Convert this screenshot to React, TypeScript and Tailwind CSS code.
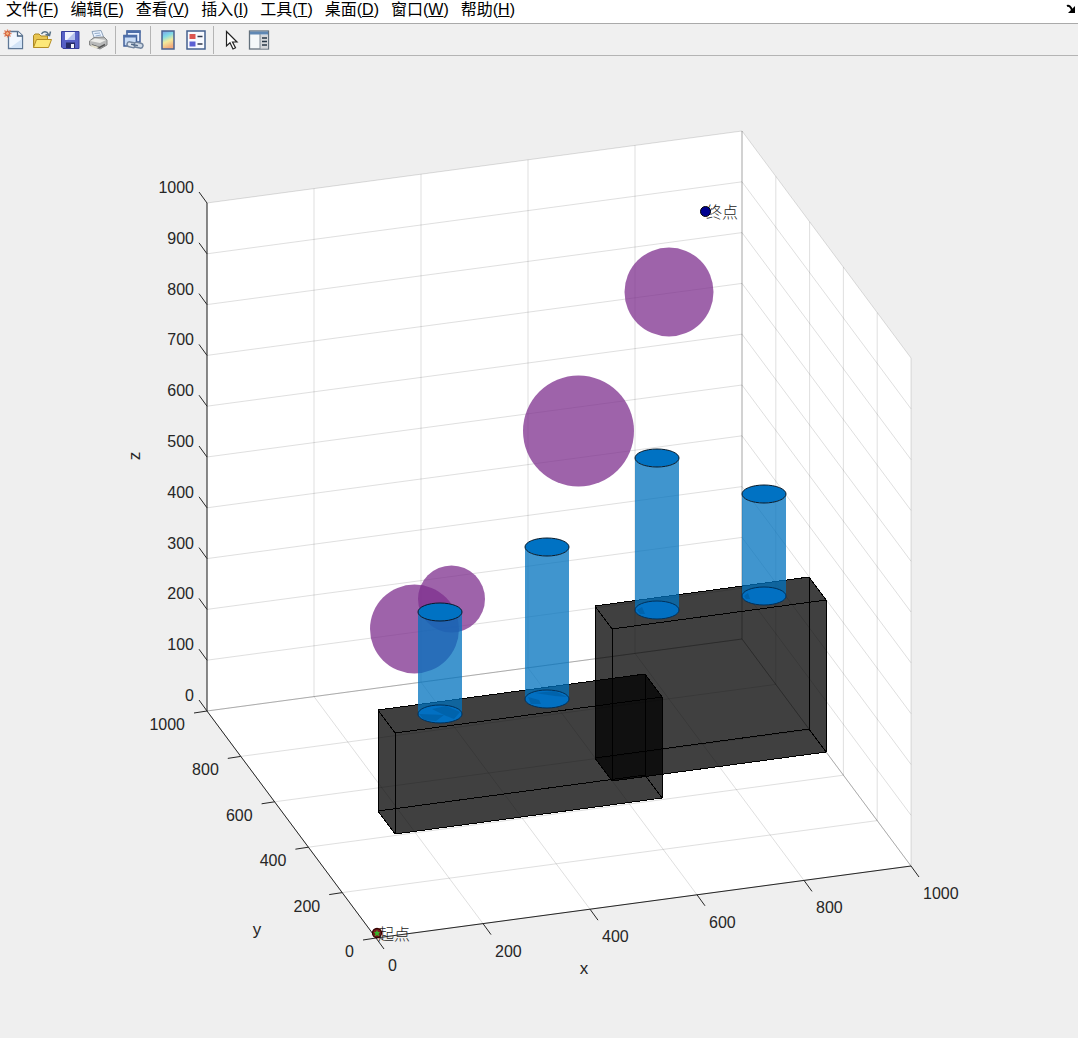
import React from "react";

const MENUS = [
  ["文件", "F"], ["编辑", "E"], ["查看", "V"], ["插入", "I"],
  ["工具", "T"], ["桌面", "D"], ["窗口", "W"], ["帮助", "H"],
];

function NewIcon() {
  return (
    <svg viewBox="0 0 22 22" className="size-[22px]">
      <path d="M5.500 2.500H15L19.500 6.500V19.500H5.500Z" fill="#f2f8ff" stroke="#5f7896" strokeWidth="1.300" />
      <path d="M6.500 19L19 10V19Z" fill="#d3e4f7" />
      <path d="M14.500 2.500V7H19.500" fill="#fff" stroke="#47617f" strokeWidth="1.300" />
      <path d="M4.500 0.500V8.500M0.500 4.500H8.500M1.500 1.500L7.500 7.500M7.500 1.500L1.500 7.500" stroke="#df7e5a" strokeWidth="1.300" />
      <circle cx="4.500" cy="4.500" r="2" fill="#f7b07d" stroke="#cf5b33" />
    </svg>
  );
}
function OpenIcon() {
  return (
    <svg viewBox="0 0 22 22" className="size-[22px]">
      <path d="M2.500 18.500V6.500L4 5H8L10 7H16.500V11" fill="#e9c550" stroke="#a98725" />
      <path d="M2.500 18.500L5.500 10.500H20.500L17.500 18.500Z" fill="#fde878" stroke="#b58e24" />
      <path d="M10.500 5C12 2 16 2 17.500 5.500M19.500 2.500L18.500 6.500L14.500 5.500" fill="none" stroke="#587186" strokeWidth="1.500" />
    </svg>
  );
}
function SaveIcon() {
  return (
    <svg viewBox="0 0 22 22" className="size-[22px]">
      <path d="M2.500 2.500H20V19.500H4L2.500 18Z" fill="#5660c6" stroke="#363e9c" />
      <path d="M6 3H16V11H6Z" fill="#eef1fd" />
      <path d="M16 3V11H8Z" fill="#b5c2ee" />
      <path d="M7 13.500H16V19H7Z" fill="#262c68" />
      <path d="M12 15H15V19H12Z" fill="#f0f2fb" />
    </svg>
  );
}
function PrintIcon() {
  return (
    <svg viewBox="0 0 22 22" className="size-[22px]">
      <path d="M5 2.500L14 1.500L17 9L8 11Z" fill="#eaf3ff" stroke="#8da1b9" />
      <path d="M7.500 4.500L13 4M8.500 7L14 6" stroke="#91a9c8" />
      <path d="M2.500 12L7 8.500L17 8L20 11V16L13 20L2.500 16Z" fill="#b8b9b9" stroke="#858686" />
      <path d="M3 12L8 9.500L19 11L13 14Z" fill="#ededea" />
      <path d="M5 16L12.500 18.500L18 15.500" fill="none" stroke="#555" strokeWidth="1.500" />
      <path d="M5 16L12 18L9 19.500L3 17Z" fill="#e6e2cf" />
    </svg>
  );
}
function LinkIcon() {
  return (
    <svg viewBox="0 0 22 22" className="size-[22px]">
      <path d="M5 2H18V13H5Z" fill="#eaf2ff" stroke="#405f99" strokeWidth="1.500" />
      <path d="M4.500 1.500H18.500V4H4.500Z" fill="#4d6ea9" />
      <path d="M2 6.500H14.500V17H2Z" fill="#c9dcf5" stroke="#405f99" strokeWidth="1.500" />
      <path d="M1.500 6H15V8.500H1.500Z" fill="#4d6ea9" />
      <g transform="rotate(12 13 16)" strokeWidth="1.500">
        <rect x="5" y="14" width="9" height="5" rx="2.500" fill="#dfe6ef" stroke="#71849e" />
        <rect x="12" y="13" width="9" height="5" rx="2.500" fill="#d0dae6" stroke="#71849e" />
        <path d="M9 16H16" stroke="#536a88" />
      </g>
    </svg>
  );
}
function ColorbarIcon() {
  return (
    <svg viewBox="0 0 22 22" className="size-[22px]">
      <defs>
        <linearGradient id="spectrum" x1="0" y1="0" x2="0.300" y2="1">
          <stop offset="0" stopColor="#7c9ce8" /><stop offset="0.350" stopColor="#7fdbe8" />
          <stop offset="0.650" stopColor="#f2eb9c" /><stop offset="1" stopColor="#f4ac7c" />
        </linearGradient>
      </defs>
      <rect x="5" y="2" width="12" height="18" fill="url(#spectrum)" stroke="#4a608f" strokeWidth="1.500" />
    </svg>
  );
}
function LegendIcon() {
  return (
    <svg viewBox="0 0 22 22" className="size-[22px]">
      <rect x="2" y="2" width="18" height="18" fill="#f8faff" stroke="#44608f" strokeWidth="1.500" />
      <path d="M4.500 5H10.500V10H4.500Z" fill="#dc5450" /><path d="M4.500 12.500H10.500V17.500H4.500Z" fill="#5a5fd3" />
      <path d="M12.500 7.500H17.500M12.500 15H17.500" stroke="#30394c" strokeWidth="1.500" />
    </svg>
  );
}
function PointerIcon() {
  return (
    <svg viewBox="0 0 22 22" className="size-[22px]">
      <path d="M6.500 2.500V17L10 13.800L13 20L15.500 18.800L12.500 13H17Z" fill="#fff" stroke="#222" strokeWidth="1.200" />
    </svg>
  );
}
function InspectorIcon() {
  return (
    <svg viewBox="0 0 22 22" className="size-[22px]">
      <rect x="1.500" y="2" width="19" height="18" fill="#f5f8f9" stroke="#64717d" strokeWidth="1.300" />
      <path d="M2 2.500H20V5.500H2Z" fill="#5f88b4" /><path d="M12 6H20V19.500H12Z" fill="#d5d7da" />
      <path d="M12 5V20" stroke="#7f8b95" /><path d="M14 9H19M14 12.500H19M14 16H19" stroke="#273746" strokeWidth="1.500" />
    </svg>
  );
}

const TOOLS = [
  { name: "新建", Icon: NewIcon }, { name: "打开", Icon: OpenIcon },
  { name: "保存", Icon: SaveIcon }, { name: "打印", Icon: PrintIcon },
  { name: "链接绘图", Icon: LinkIcon, divided: true },
  { name: "颜色栏", Icon: ColorbarIcon, divided: true }, { name: "图例", Icon: LegendIcon },
  { name: "编辑绘图", Icon: PointerIcon, divided: true }, { name: "属性检查器", Icon: InspectorIcon },
];

type Point = [number, number, number];

/** Orthographic projection from data space (0 to 1000 on each axis) to the drawing. */
function project([x, y, z]: Point) {
  return [376 + 0.535 * x - 0.169 * y, 938 - 0.072 * x - 0.227 * y - 0.508 * z];
}
const toPath = (...points: Point[]) =>
  "M" + points.map((p) => project(p).map((n) => n.toFixed(1)).join(" ")).join("L");

const EVEN = [0, 200, 400, 600, 800, 1000];
const TENS = [0, 100, 200, 300, 400, 500, 600, 700, 800, 900, 1000];
const GRID = [
  ...EVEN.map((v) => toPath([v, 0, 0], [v, 1000, 0], [v, 1000, 1000])),
  ...EVEN.map((v) => toPath([0, v, 0], [1000, v, 0], [1000, v, 1000])),
  ...TENS.map((v) => toPath([0, 1000, v], [1000, 1000, v], [1000, 0, v])),
].join("");

const SPHERES = [
  [669, 292, 44.5], [578.5, 431, 55.5], [451.5, 599, 33.5], [414.5, 629, 44.5],
];
const CYLINDERS = [
  { x: 657, top: 458, bottom: 610, shade: "M-20 0L-15 -3L-12 4L-17 4Z" },
  { x: 764, top: 494, bottom: 596, shade: "M-20 0L-16 -3L-14 3L-18 3Z" },
  { x: 440, top: 612, bottom: 714, shade: "M-8 -5L6 -8L20 -2L14 5L4 1Z M-21 0L4 1L-4 7L-16 6Z" },
  { x: 547, top: 547, bottom: 699, shade: "M-19 -2L-8 1L-6 5L-16 5Z M-12 -6L8 -8L20 -2L8 -3Z" },
];
const BOXES = [
  { x: 595, y: 606, width: 214, rise: 29, height: 152 },
  { x: 378, y: 710, width: 267, rise: 36, height: 101 },
];

function Box({ x, y, width, rise, height }: (typeof BOXES)[number]) {
  const right = x + width;
  const far = y - rise;
  const outline = `M${x} ${y}L${right} ${far}L${right + 17} ${far + 23}V${far + 23 + height}L${x + 17} ${y + 23 + height}L${x} ${y + height}Z`;
  return (
    <g>
      <path d={outline} fill="#000" fillOpacity="0.750" />
      <path
        d={`${outline}M${x} ${y}L${x + 17} ${y + 23}V${y + 23 + height}M${x + 17} ${y + 23}L${right + 17} ${far + 23}M${right} ${far}V${far + height}L${x} ${y + height}M${right} ${far + height}L${right + 17} ${far + 23 + height}`}
        fill="none" stroke="#000" shapeRendering="crispEdges"
      />
    </g>
  );
}

function Plot() {
  return (
    <svg viewBox="0 56 1078 982" className="block w-full font-['Liberation_Sans','Noto_Sans_CJK_SC',sans-serif] text-base" role="img" aria-label="三维路径规划场景">
      <path d="M207 203L742 131L911 358V866L376 938L207 711Z" fill="#fff" />
      <path d={GRID} fill="none" stroke="#262626" strokeOpacity="0.150" />
      <path d="M207 711L742 639L911 866M742 639V131" fill="none" stroke="#262626" strokeOpacity="0.150" />
      <path d="M207 203V711L376 938L911 866" fill="none" stroke="#262626" />
      <g stroke="#262626" fill="#262626">
        {TENS.map((v) => {
          const [x, y] = project([0, 1000, v]);
          return <g key={v}><path d={`M${x} ${y}l-8 -11`} /><text x="194" y={y - 10} textAnchor="end" stroke="none">{v}</text></g>;
        })}
        {EVEN.map((v) => {
          const [x, y] = project([0, v, 0]);
          return <g key={v}><path d={`M${x} ${y}l-13 2`} /><text x={x - 22} y={y + 19} textAnchor="end" stroke="none">{v}</text></g>;
        })}
        {EVEN.map((v) => {
          const [x, y] = project([v, 0, 0]);
          return <g key={v}><path d={`M${x} ${y}l8 11`} /><text x={x + 12} y={y + 33} stroke="none">{v}</text></g>;
        })}
      </g>
      <g fill="#262626" className="text-[17px]" textAnchor="middle">
        <text x="584" y="974">x</text><text x="257" y="935">y</text>
        <text transform="translate(140 456) rotate(-90)">z</text>
      </g>
      <g fill="#7e2f8e" fillOpacity="0.750">
        {SPHERES.map(([cx, cy, r]) => <circle key={cx} cx={cx} cy={cy} r={r} />)}
      </g>
      {BOXES.map((b) => <Box key={b.x} {...b} />)}
      {CYLINDERS.map(({ x, top, bottom, shade }) => (
        <g key={x}>
          <path d={`M${x - 22} ${top}V${bottom}A22 9 0 0 0 ${x + 22} ${bottom}V${top}A22 9 0 0 1 ${x - 22} ${top}Z`} fill="#0072bd" fillOpacity="0.750" />
          <ellipse cx={x} cy={bottom} rx="22" ry="9" fill="#0072c8" fillOpacity="0.850" stroke="#00305a" />
          <path d={shade} transform={`translate(${x} ${bottom})`} fill="#005a9c" fillOpacity="0.600" />
          <ellipse cx={x} cy={top} rx="22" ry="9" fill="#0072c3" stroke="#061a2b" />
        </g>
      ))}
      <g fill="#222" className="font-['Liberation_Serif','Noto_Sans_CJK_SC',serif] font-light">
        <text x="706" y="218">终点</text><text x="378" y="940">起点</text>
      </g>
      <circle cx="705.500" cy="211.500" r="5" fill="#00008f" stroke="#000" />
      <circle cx="377" cy="933" r="4.500" fill="#7a2020" stroke="#300" strokeWidth="1.300" />
      <path d="M377 930L378 932H380L378.500 934L379.500 936.500L377 935L374.500 936.500L375.500 934L374 932H376Z" fill="#37b52a" />
    </svg>
  );
}

export default function App() {
  return (
    <div className="min-h-screen bg-[#efefef] font-['Liberation_Sans','Noto_Sans_CJK_SC',sans-serif] text-black">
      <nav className="flex h-6 items-start justify-between border-b border-[#aaa] bg-white pl-[6px]">
        <div className="flex gap-3">
          {MENUS.map(([label, key]) => (
            <button key={key} className="h-5 text-base leading-5 whitespace-nowrap">
              {label}(<span className="underline">{key}</span>)
            </button>
          ))}
        </div>
        <button aria-label="停靠" className="mt-1 mr-[2px]">
          <svg viewBox="0 0 10 10" className="size-[10px]">
            <path d="M1 2C3 1 5 3 6 6" fill="none" stroke="#000" strokeWidth="2" /><path d="M9 2V9H2Z" />
          </svg>
        </button>
      </nav>
      <div role="toolbar" className="flex h-8 items-center border-b border-[#b4b4b4] bg-[#f0f0f0] pl-[3px]">
        {TOOLS.map(({ name, Icon, divided }) => (
          <React.Fragment key={name}>
            {divided && <span className="mr-[6px] h-7 w-px bg-[#b4b4b4]" />}
            <button aria-label={name} className="mr-[6px] flex size-[22px] items-center justify-center"><Icon /></button>
          </React.Fragment>
        ))}
      </div>
      <main><Plot /></main>
    </div>
  );
}
